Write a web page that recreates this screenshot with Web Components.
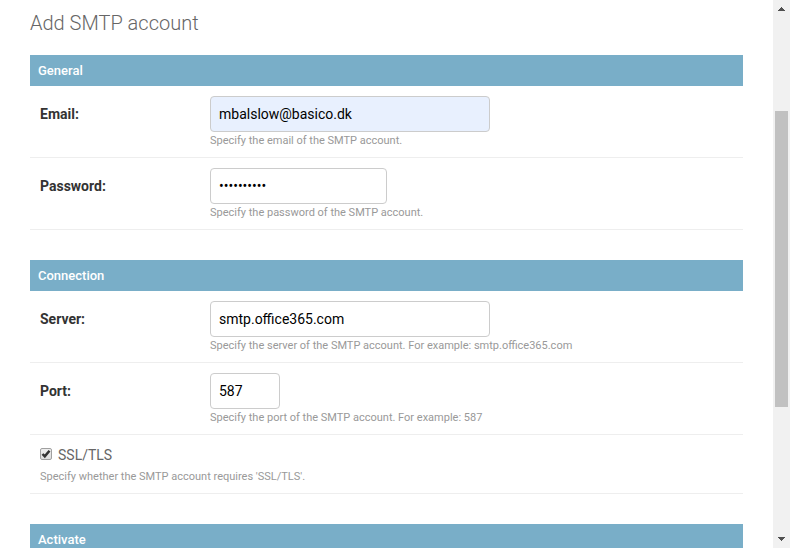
<!DOCTYPE html>
<html lang="en">
<head>
<meta charset="utf-8">
<title>Add SMTP account</title>
<style>
  html { font-family: Roboto, "Liberation Sans", sans-serif; font-size: 14px; color: #333; background: #fff; }
  body { margin: 0; }
</style>
</head>
<body>
<admin-shell>
  <page-title>Add SMTP account</page-title>
  <form-module heading="General">
    <form-row label="Email:" name="email" value="mbalslow@basico.dk" size="large" filled help="Specify the email of the SMTP account."></form-row>
    <form-row label="Password:" name="password" type="password" value="abcdefghij" size="medium" help="Specify the password of the SMTP account."></form-row>
  </form-module>
  <form-module heading="Connection">
    <form-row label="Server:" name="server" value="smtp.office365.com" size="large" help="Specify the server of the SMTP account. For example: smtp.office365.com"></form-row>
    <form-row label="Port:" name="port" value="587" size="small" help="Specify the port of the SMTP account. For example: 587"></form-row>
    <check-row label="SSL/TLS" name="ssl" checked help="Specify whether the SMTP account requires 'SSL/TLS'."></check-row>
  </form-module>
  <form-module heading="Activate"></form-module>
  <scroll-rail slot="rail"></scroll-rail>
</admin-shell>
<script>
class Base extends HTMLElement {
  connectedCallback() {
    if (this.shadowRoot) return;
    this.attachShadow({ mode: 'open' }).innerHTML = this.render();
  }
  attr(name) {
    return (this.getAttribute(name) || '').replace(/&/g, '&amp;').replace(/"/g, '&quot;').replace(/</g, '&lt;');
  }
}

customElements.define('admin-shell', class extends Base {
  render() {
    return `<style>
      :host { display: flex; height: 100vh; overflow: hidden; }
      main { flex: 1; min-width: 0; overflow: hidden; padding: 11px 30px 0; }
    </style><main><slot></slot></main><slot name="rail"></slot>`;
  }
});

customElements.define('page-title', class extends Base {
  render() {
    return `<style>
      :host { display: block; margin-bottom: 20px; }
      h1 { margin: 0; font-size: 20px; line-height: 24px; font-weight: 300; color: #666; }
    </style><h1><slot></slot></h1>`;
  }
});

customElements.define('form-module', class extends Base {
  render() {
    return `<style>
      :host { display: block; margin-bottom: 30px; }
      section { display: flex; flex-direction: column; }
      h2 { margin: 0; padding: 8px; font-size: 13px; line-height: 15px; font-weight: 500; color: #fff; background: #79aec8; }
    </style><section><h2>${this.attr('heading')}</h2><slot></slot></section>`;
  }
});

customElements.define('form-row', class extends Base {
  render() {
    return `<style>
      :host { display: grid; grid-template-columns: 170px 1fr; padding: 10px; border-bottom: 1px solid #eee; }
      label { font-size: 14px; line-height: 36px; font-weight: 700; }
      .field { display: flex; flex-direction: column; align-items: flex-start; gap: 2px; min-width: 0; }
      input { box-sizing: border-box; width: 280px; max-width: 100%; height: 36px; margin: 0; padding: 8px; font: inherit; font-size: 14px; color: #000; background: #fff; border: 1px solid #ccc; border-radius: 4px; }
      :host([size="medium"]) input { width: 177px; }
      :host([size="small"]) input { width: 70px; }
      :host([filled]) input { background: #e8f0fe; }
      .help { font-size: 11px; line-height: 13px; color: #999; }
    </style>
    <label for="field">${this.attr('label')}</label>
    <div class="field">
      <input id="field" name="${this.attr('name')}" type="${this.attr('type') || 'text'}" value="${this.attr('value')}" aria-describedby="help">
      <div class="help" id="help">${this.attr('help')}</div>
    </div>`;
  }
});

customElements.define('check-row', class extends Base {
  render() {
    return `<style>
      :host { display: block; padding: 10px; border-bottom: 1px solid #eee; }
      .line { display: flex; align-items: flex-start; gap: 6px; height: 20px; }
      .box { display: grid; width: 12px; height: 12px; margin-top: 3px; }
      .box > * { grid-area: 1 / 1; }
      input { appearance: none; box-sizing: border-box; width: 12px; height: 12px; margin: 0; border: 1px solid #a0a0a0; border-radius: 2px; background: linear-gradient(#eee, #ddd); }
      svg { width: 12px; height: 12px; pointer-events: none; }
      input:not(:checked) + svg { visibility: hidden; }
      label { font-size: 14px; line-height: 20px; color: #666; }
      .help { margin-top: 5px; font-size: 11px; line-height: 13px; color: #999; }
    </style>
    <div class="line">
      <span class="box"><input id="field" type="checkbox" name="${this.attr('name')}" ${this.hasAttribute('checked') ? 'checked' : ''} aria-describedby="help"><svg viewBox="0 0 12 12" aria-hidden="true"><path d="M2.5 6 L4.8 8.4 L9.5 2.8" fill="none" stroke="#333" stroke-width="2.5"/></svg></span>
      <label for="field">${this.attr('label')}</label>
    </div>
    <div class="help" id="help">${this.attr('help')}</div>`;
  }
});

customElements.define('scroll-rail', class extends Base {
  render() {
    return `<style>
      :host { display: flex; flex-direction: column; flex: 0 0 17px; background: #f1f1f1; }
      button { display: grid; place-items: center; flex: 0 0 17px; margin: 0; padding: 0; border: 0; background: none; }
      svg { display: block; width: 7px; height: 5px; fill: #505050; }
      .track { flex: 1; display: flex; flex-direction: column; padding: 0 2px; }
      .before { flex: 94; }
      .thumb { flex: 296; background: #c1c1c1; }
      .after { flex: 124; }
    </style>
    <button type="button" aria-label="Scroll up"><svg viewBox="0 0 7 5" shape-rendering="crispEdges"><path d="M3 1h1v1h1v1h1v1h1v1H0V4h1V3h1V2h1z"/></svg></button>
    <div class="track"><div class="before"></div><div class="thumb"></div><div class="after"></div></div>
    <button type="button" aria-label="Scroll down"><svg viewBox="0 0 7 5" shape-rendering="crispEdges"><path d="M0 0h7v1H6v1H5v1H4v1H3V3H2V2H1V1H0z"/></svg></button>`;
  }
});
</script>
</body>
</html>
